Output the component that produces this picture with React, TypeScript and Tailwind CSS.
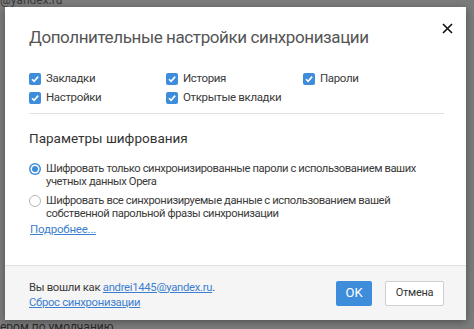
import React from 'react';

const font = { fontFamily: 'Roboto, "Noto Sans", sans-serif' };

function Check({ label }: { label: string }) {
  return (
    <label className="flex items-center gap-[5px] h-[19px]">
      <span className="w-[12px] h-[12px] rounded-[2px] bg-[#3d8ddb] flex items-center justify-center">
        <svg width="10" height="10" viewBox="0 0 10 10">
          <path d="M2 5.2 L4.1 7.3 L8.2 2.6" fill="none" stroke="#fff" strokeWidth="1.6" />
        </svg>
      </span>
      <span className="text-[11.5px] tracking-[-0.35px] text-[#3a3a3a] whitespace-nowrap">{label}</span>
    </label>
  );
}

function Radio({ checked, lines }: { checked?: boolean; lines: string[] }) {
  return (
    <div className="flex items-start gap-[5px]">
      <span
        className={
          checked
            ? 'mt-[1px] w-[12px] h-[12px] rounded-full bg-[#3d8ddb] flex items-center justify-center shrink-0'
            : 'mt-[1px] w-[12px] h-[12px] rounded-full border border-[#b5b5b5] bg-white shrink-0'
        }
      >
        {checked && (
          <span className="w-[6px] h-[6px] rounded-full bg-[#3d8ddb] ring-[1.5px] ring-white" />
        )}
      </span>
      <div className="text-[11.2px] tracking-[-0.4px] leading-[13px] text-[#3a3a3a] whitespace-nowrap">
        {lines.map((l) => (
          <div key={l}>{l}</div>
        ))}
      </div>
    </div>
  );
}

export default function App() {
  return (
    <div className="relative w-[474px] h-[329px] bg-[#7c7c7c] overflow-hidden" style={font}>
      {/* dimmed page behind */}
      <div className="absolute left-[0px] top-[-9px] text-[12px] text-[#3a3a3a]">@yandex.ru</div>
      <div className="absolute left-[0px] top-[318px] text-[12px] text-[#2a2a2a]">ером по умолчанию.</div>

      {/* dialog */}
      <div className="absolute left-[5px] top-[7px] w-[461px] h-[313px] bg-white flex flex-col shadow-[0_2px_8px_rgba(0,0,0,0.35)]">
        <div className="flex-1 px-[24px] pt-[18px] relative">
          <button className="absolute right-[12px] top-[14px] w-[14px] h-[14px] flex items-center justify-center">
            <svg width="11" height="11" viewBox="0 0 11 11">
              <path d="M1 1 L10 10 M10 1 L1 10" stroke="#111" strokeWidth="1.6" />
            </svg>
          </button>
          <h1 className="text-[17px] tracking-[-0.4px] text-[#555] leading-[24px] whitespace-nowrap">
            Дополнительные настройки синхронизации
          </h1>

          <div className="mt-[20px] grid grid-cols-[137px_137px_1fr]">
            <Check label="Закладки" />
            <Check label="История" />
            <Check label="Пароли" />
            <Check label="Настройки" />
            <Check label="Открытые вкладки" />
          </div>

          <div className="mt-[6px] h-px bg-[#e2e2e2] mr-[-2px]" />

          <div className="mt-[15px] text-[13.5px] text-[#333] leading-[18px]">Параметры шифрования</div>

          <div className="mt-[15px] flex flex-col gap-[6px]">
            <Radio
              checked
              lines={[
                'Шифровать только синхронизированные пароли с использованием ваших',
                'учетных данных Opera',
              ]}
            />
            <Radio
              lines={[
                'Шифровать все синхронизируемые данные с использованием вашей',
                'собственной парольной фразы синхронизации',
              ]}
            />
          </div>

          <a className="block mt-[1px] ml-[1px] text-[11.5px] tracking-[-0.2px] text-[#3d7fcf] underline leading-[16px]">
            Подробнее...
          </a>
        </div>

        <div className="h-[55px] bg-[#f5f5f5] border-t border-[#e0e0e0] flex items-center px-[24px]">
          <div className="flex-1 pt-[3px] text-[11.3px] tracking-[-0.3px] leading-[15px] text-[#3a3a3a]">
            <div>
              Вы вошли как <a className="text-[#3d7fcf] underline">andrei1445@yandex.ru</a>.
            </div>
            <a className="text-[#3d7fcf] underline">Сброс синхронизации</a>
          </div>
          <div className="flex items-center gap-[13px] mr-[-2px]">
            <button className="w-[36px] h-[25px] rounded-[2px] bg-[#3d8ddb] text-white text-[13px]">OK</button>
            <button className="w-[59px] h-[25px] rounded-[2px] bg-white border border-[#cfcfcf] text-[11px] tracking-[-0.3px] text-[#333]">
              Отмена
            </button>
          </div>
        </div>
      </div>
    </div>
  );
}
